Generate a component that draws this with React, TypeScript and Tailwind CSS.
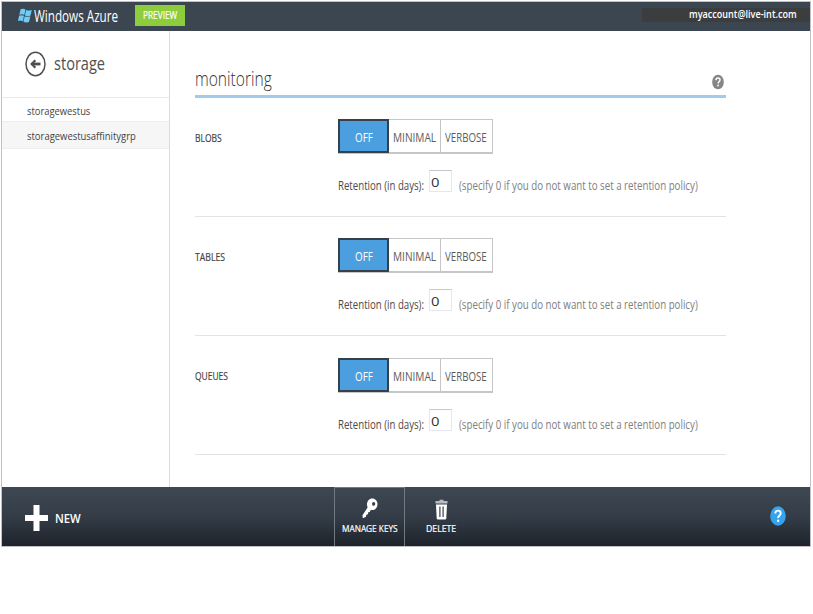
import { useLayoutEffect, useRef, useState } from "react";

/** One line of text condensed horizontally to fill the given width. */
function Fit({ w, className = "", children }: { w: number; className?: string; children: string }) {
  const ref = useRef<HTMLSpanElement>(null);
  const [scale, setScale] = useState(1);
  useLayoutEffect(() => {
    const natural = ref.current?.offsetWidth ?? w;
    setScale(w / natural);
  }, [w, children]);
  return (
    <span className={`block shrink-0 whitespace-nowrap ${className}`} style={{ width: w }}>
      <span ref={ref} className="inline-block origin-left align-top" style={{ transform: `scaleX(${scale})` }}>
        {children}
      </span>
    </span>
  );
}

function WindowsLogo() {
  return (
    <svg className="h-[15px] w-[14px] shrink-0" viewBox="0 0 14 15" fill="#6fcdf5">
      <path d="M2.6 1.300C4.300.300 6 .500 7.500 1.500L6.300 7C4.700 6.100 3 6.100 1.300 6.900Z" />
      <path d="M8.100 1.900c1.700.800 3.400.800 5.700 0L12.500 7.600c-2 .800-4 .700-5.600-.200Z" />
      <path d="M1.100 7.700C2.800 6.900 4.500 7 6 7.800L4.800 13.300C3.200 12.300 1.600 12.300-.1 13.100Z" />
      <path d="M6.700 8.200c1.600.800 3.400.800 5.600.100L11 14c-2 .700-4 .600-5.600-.400Z" />
    </svg>
  );
}

function BackIcon() {
  return (
    <svg className="h-[26px] w-[21px] shrink-0" viewBox="0 0 21 26" fill="none" stroke="#4f4f4f">
      <ellipse cx="10.500" cy="13" rx="9.500" ry="11.800" strokeWidth="1.500" />
      <path d="M6.500 13h9" strokeWidth="2.800" />
      <path d="M10.300 9.200 6.700 13l3.600 3.800" strokeWidth="2.200" />
    </svg>
  );
}

function KeyIcon() {
  return (
    <svg className="h-[21px] w-[16px]" viewBox="0 0 16 21" fill="#fff">
      <path
        fillRule="evenodd"
        d="M10.200.500C13.400.500 15.500 3 15.500 6.100c0 3.500-2.300 6-5 6-.600 0-1.100-.100-1.600-.300L7.700 14l-1.500.300-.200 2-1.700.500-.300 2L.800 20.200.500 17.300l5.100-7.800C5.200 8.700 5 7.700 5 6.600 5 3 7.300.500 10.200.500ZM11.600 4a1.600 1.900 0 1 0 .1 3.800 1.600 1.900 0 0 0-.1-3.800Z"
      />
    </svg>
  );
}

function TrashIcon() {
  return (
    <svg className="h-[21px] w-[13px]" viewBox="0 0 13 21">
      <path d="M4.500 2V.800h4V2H12.500v2.500H.500V2Z" fill="#b9bdc1" />
      <path d="M1 5.500h11l-.7 13.800q-.1 1.200-1.300 1.200H3q-1.200 0-1.300-1.200Z" fill="#fff" />
      <path d="M4.900 7.500v10.500M8.100 7.500v10.500" stroke="#38424c" strokeWidth="1.200" />
    </svg>
  );
}

function HelpIcon({ className, fill }: { className: string; fill: string }) {
  return (
    <svg className={className} viewBox="0 0 16 20">
      <ellipse cx="8" cy="10" rx="7.800" ry="9.700" fill={fill} />
      <path d="M5.300 7.500C5.300 5.500 6.500 4.600 8 4.600S10.700 5.600 10.700 7.300C10.700 9.400 8.100 9.600 8.100 12" fill="none" stroke="#fff" strokeWidth="1.900" />
      <ellipse cx="8.100" cy="14.700" rx="1.150" ry="1.300" fill="#fff" />
    </svg>
  );
}

type SectionProps = { label: string; labelWidth: number; padding: string };

function Section({ label, labelWidth, padding }: SectionProps) {
  return (
    <section className="flex h-[119px] border-b border-[#e3e3e3]">
      <div className="w-[143px] shrink-0 pt-[31px]">
        <Fit w={labelWidth} className="text-[11px] leading-[18px] text-[#444] [-webkit-text-stroke:0.2px_#444]">{label}</Fit>
      </div>
      <div className={padding}>
        <div className="flex h-[35px] w-[155px] border border-b-2 border-[#c6c6c6] text-[12px] leading-[36px] text-[#5c5c5c]">
          <button className="-ml-px -mt-px flex h-[34px] w-[51px] shrink-0 justify-center border-2 border-[#34414d] bg-[#4b9fdf] leading-[34px] text-white">
            <Fit w={18}>OFF</Fit>
          </button>
          <button className="flex w-[52px] shrink-0 justify-center border-r border-[#c6c6c6]">
            <Fit w={43}>MINIMAL</Fit>
          </button>
          <button className="flex w-[51px] shrink-0 justify-center pr-px">
            <Fit w={42}>VERBOSE</Fit>
          </button>
        </div>
        <div className="flex pt-[16px] text-[12px]">
          <Fit w={86} className="pt-[7px] leading-[18px] text-[#4a4a4a]">Retention (in days):</Fit>
          <div className="ml-[5px] h-[22px] w-[23px] shrink-0 border border-[#e4e6f0] border-t-[#c4c7cd] pl-px leading-[23px] text-[#333]">
            <Fit w={8} className="text-[13px]">0</Fit>
          </div>
          <Fit w={239} className="ml-[7px] pt-[7px] leading-[18px] text-[#808080]">
            (specify 0 if you do not want to set a retention policy)
          </Fit>
        </div>
      </div>
    </section>
  );
}

export default function App() {
  return (
    <div className="h-[614px] w-[813px] overflow-hidden bg-white pl-px pt-px font-['Open_Sans','Noto_Sans',sans-serif]">
      <div className="flex h-[546px] w-[810px] flex-col border border-[#bfc1c4]">
        <header className="flex h-[29px] shrink-0 items-start bg-[#3b4651] pl-[16px] text-white">
          <div className="flex pt-[6px]">
            <WindowsLogo />
            <Fit w={84} className="ml-[2px] text-[16px] leading-[16px]">Windows Azure</Fit>
          </div>
          <div className="ml-[17px] mt-[3px] flex h-[21px] w-[50px] justify-center bg-[#8dcc3c]">
            <Fit w={34} className="text-[10px] leading-[20px] [-webkit-text-stroke:0.2px_#fff]">PREVIEW</Fit>
          </div>
          <div className="ml-auto mt-[6px] flex h-[14px] w-[168px] justify-end bg-[#3c3d3f] pr-[13px]">
            <Fit w={108} className="text-[11px] font-semibold leading-[12px]">myaccount@live-int.com</Fit>
          </div>
        </header>

        <div className="flex h-[456px] shrink-0">
          <aside className="w-[168px] shrink-0 border-r border-[#dcdcdc]">
            <div className="flex h-[67px] border-b border-[#e9e9e9] pl-[23px] pt-[20px]">
              <BackIcon />
              <Fit w={51} className="ml-[8px] text-[18px] leading-[24px] text-[#505050]">storage</Fit>
            </div>
            <div className="h-[24px] border-b border-[#eee] pl-[25px]">
              <Fit w={63} className="text-[11px] leading-[26px] text-[#444]">storagewestus</Fit>
            </div>
            <div className="h-[27px] border-b border-[#eee] bg-[#f6f6f6] pl-[25px]">
              <Fit w={109} className="text-[11px] leading-[28px] text-[#444]">storagewestusaffinitygrp</Fit>
            </div>
          </aside>

          <main className="w-[556px] pl-[25px]">
            <div className="flex h-[67px] justify-between border-b-[3px] border-[#9fcbee] pt-[34px]">
              <Fit w={77} className="font-light text-[20px] leading-[27px] text-[#333]">monitoring</Fit>
              <HelpIcon className="mr-[2px] mt-[9px] h-[16px] w-[12px]" fill="#868686" />
            </div>
            <Section label="BLOBS" labelWidth={27} padding="pt-[21px]" />
            <Section label="TABLES" labelWidth={30} padding="pt-[21px]" />
            <Section label="QUEUES" labelWidth={33} padding="pt-[22px]" />
          </main>
        </div>

        <footer className="flex h-[59px] shrink-0 bg-linear-to-b from-[#3e4852] via-[#343d47] to-[#1e232b] text-white">
          <div className="flex w-[332px] items-center pl-[23px] pt-[3px]">
            <svg className="h-[26px] w-[23px]" viewBox="0 0 23 26" fill="#fff">
              <path d="M8.500 0h6v10H23v6h-8.500v10h-6V16H0v-6h8.500Z" />
            </svg>
            <Fit w={26} className="ml-[7px] pt-[2px] text-[13px] font-semibold">NEW</Fit>
          </div>
          <div className="flex w-[71px] flex-col items-center border border-b-0 border-[#737980] pt-[10px]">
            <KeyIcon />
            <Fit w={56} className="text-[9px] leading-[19px] [-webkit-text-stroke:0.2px_#fff]">MANAGE KEYS</Fit>
          </div>
          <div className="flex w-[72px] flex-col items-center pt-[12px]">
            <TrashIcon />
            <Fit w={30} className="text-[9px] leading-[17px] [-webkit-text-stroke:0.2px_#fff]">DELETE</Fit>
          </div>
          <HelpIcon className="ml-auto mr-[24px] mt-[19px] h-[20px] w-[16px]" fill="#36a3ef" />
        </footer>
      </div>
    </div>
  );
}
